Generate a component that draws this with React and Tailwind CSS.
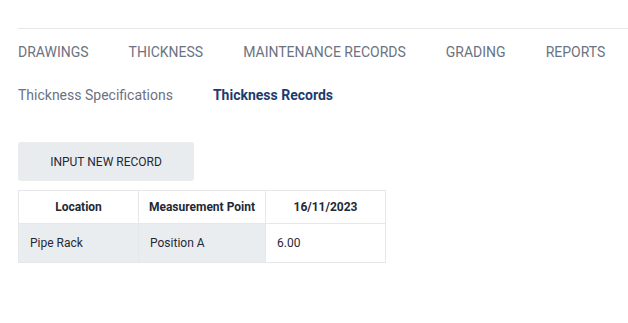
export default function App() {
  const tabs = ['DRAWINGS', 'THICKNESS', 'MAINTENANCE RECORDS', 'GRADING', 'REPORTS'];

  return (
    <div className="min-h-screen bg-white pl-[18px] pt-[28px]" style={{ fontFamily: 'Roboto, "Liberation Sans", sans-serif' }}>
      <div className="border-t border-[#e5e7eb]">
        <nav className="flex gap-[40px] pt-[13px] text-[14px] text-[#6c727f]">
          {tabs.map((t) => (
            <span key={t} className="leading-[20px]">{t}</span>
          ))}
        </nav>
        <div className="flex gap-[40px] pt-[23px] text-[14px] leading-[20px]">
          <span className="text-[#6c727f]">Thickness Specifications</span>
          <span className="font-bold text-[#1d3c6e]">Thickness Records</span>
        </div>
      </div>

      <button className="mt-[37px] h-[39px] w-[176px] rounded-[3px] bg-[#e9ecef] text-[12px] text-[#1f2937]">
        INPUT NEW RECORD
      </button>

      <table className="mt-[9px] border-collapse text-[12px] text-[#1f2937]">
        <thead>
          <tr className="h-[33px]">
            <th className="w-[120px] border border-[#e5e7eb] font-bold">Location</th>
            <th className="w-[127px] border border-[#e5e7eb] font-bold">Measurement Point</th>
            <th className="w-[120px] border border-[#e5e7eb] font-bold">16/11/2023</th>
          </tr>
        </thead>
        <tbody>
          <tr className="h-[39px]">
            <td className="border border-[#e5e7eb] bg-[#eaedf0] px-[11px]">Pipe Rack</td>
            <td className="border border-[#e5e7eb] bg-[#eaedf0] px-[11px]">Position A</td>
            <td className="border border-[#e5e7eb] px-[11px]">6.00</td>
          </tr>
        </tbody>
      </table>
    </div>
  );
}
